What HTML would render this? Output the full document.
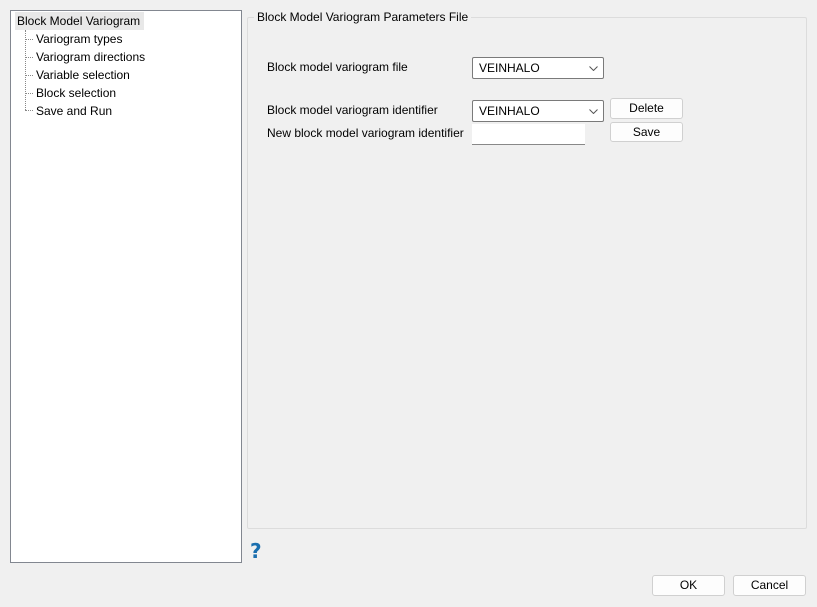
<!DOCTYPE html>
<html><head><style>
body{margin:0;width:817px;height:607px;background:#f0f0f0;font-family:"Liberation Sans",sans-serif;font-size:12px;color:#000;position:relative;overflow:hidden}
.a{position:absolute}
.tree{left:10px;top:10px;width:230px;height:551px;background:#fff;border:1px solid #828790}
.item{position:absolute;left:25px;white-space:nowrap}
.dl{position:absolute;border-top:1px dotted #888;width:8px;left:14px}
.grp{left:247px;top:17px;width:558px;height:510px;border:1px solid #dcdcdc;border-radius:2px}
.dd{background:#fff;border:1px solid #7a7a7a;border-radius:2px;line-height:20px;padding-left:6px;box-sizing:border-box;width:132px;height:22px}
.btn{background:#fdfdfd;border:1px solid #d0d0d0;border-radius:3px;text-align:center;box-sizing:border-box}
.chev{position:absolute;right:5px;top:8px}
</style></head><body>
<div class="a tree">
 <div class="a" style="left:4px;top:1px;width:129px;height:18px;background:#e8e8e8"></div>
 <div class="item" style="left:6px;top:3px">Block Model Variogram</div>
 <div class="a" style="left:14px;top:19px;height:80px;border-left:1px dotted #888"></div>
 <div class="dl" style="top:28px"></div><div class="item" style="top:21px">Variogram types</div>
 <div class="dl" style="top:46px"></div><div class="item" style="top:39px">Variogram directions</div>
 <div class="dl" style="top:64px"></div><div class="item" style="top:57px">Variable selection</div>
 <div class="dl" style="top:82px"></div><div class="item" style="top:75px">Block selection</div>
 <div class="dl" style="top:99px"></div><div class="item" style="top:93px">Save and Run</div>
</div>
<div class="a grp"></div>
<div class="a" style="left:254px;top:10px;padding:0 3px;background:#f0f0f0">Block Model Variogram Parameters File</div>
<div class="a" style="left:267px;top:60px">Block model variogram file</div>
<div class="a dd" style="left:472px;top:57px">VEINHALO<svg class="chev" width="9" height="5"><path d="M0.5 0.5L4.5 4.5L8.5 0.5" fill="none" stroke="#555" stroke-width="1"/></svg></div>
<div class="a" style="left:267px;top:103px">Block model variogram identifier</div>
<div class="a dd" style="left:472px;top:100px">VEINHALO<svg class="chev" width="9" height="5"><path d="M0.5 0.5L4.5 4.5L8.5 0.5" fill="none" stroke="#555" stroke-width="1"/></svg></div>
<div class="a" style="left:267px;top:126px">New block model variogram identifier</div>
<div class="a" style="left:472px;top:124px;width:113px;height:21px;background:#fff;border-bottom:1px solid #888;box-sizing:border-box"></div>
<div class="a btn" style="left:610px;top:98px;width:73px;height:21px;line-height:19px">Delete</div>
<div class="a btn" style="left:610px;top:122px;width:73px;height:20px;line-height:18px">Save</div>
<div class="a" style="left:250px;top:539px;color:#1a6faf;font-weight:bold;font-size:20px;font-family:'DejaVu Sans',sans-serif">?</div>
<div class="a btn" style="left:652px;top:575px;width:73px;height:21px;line-height:19px">OK</div>
<div class="a btn" style="left:733px;top:575px;width:73px;height:21px;line-height:19px">Cancel</div>
</body></html>
